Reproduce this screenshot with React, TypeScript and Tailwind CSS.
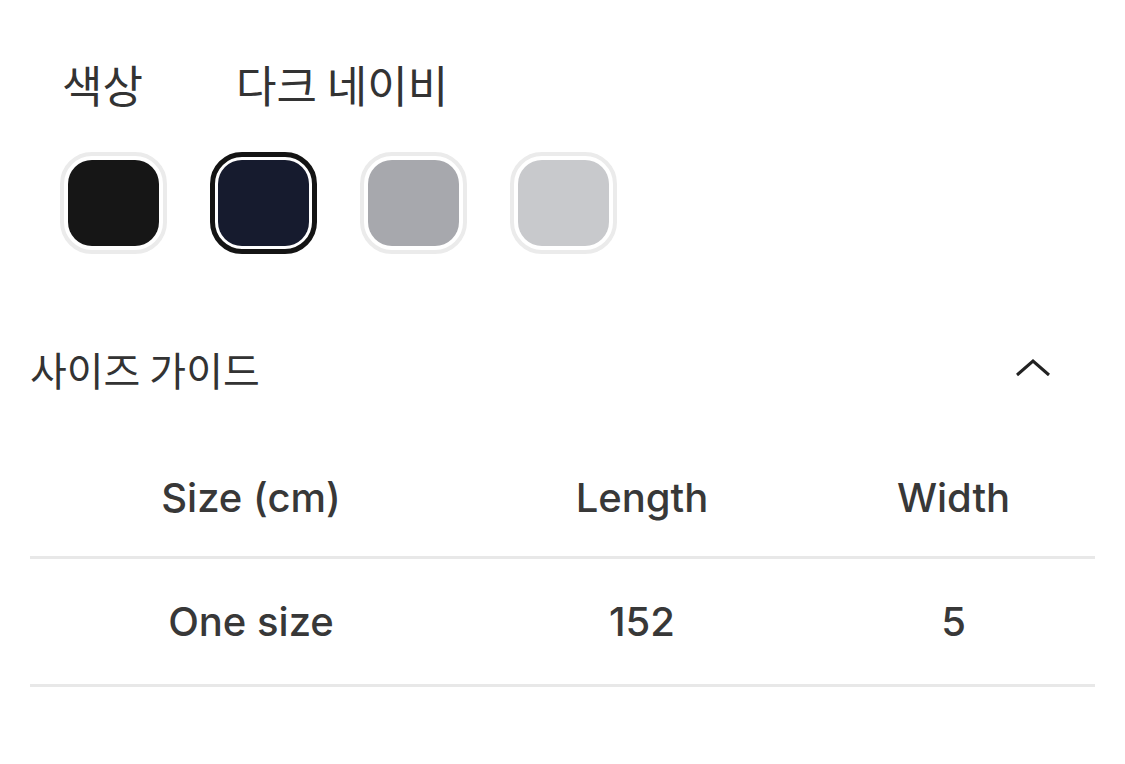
const swatches = [
  { name: "블랙", color: "bg-[#161616]" },
  { name: "다크 네이비", color: "bg-[#161b2e]", selected: true },
  { name: "그레이", color: "bg-[#a7a8ad]" },
  { name: "라이트 그레이", color: "bg-[#c8c9cc]" },
];

const rows = [{ size: "One size", length: "152", width: "5" }];

function Swatch({ color, selected }: { color: string; selected?: boolean }) {
  return (
    <button
      className={
        selected
          ? "flex h-[102px] w-[107px] items-center justify-center rounded-[32px] border-[5px] border-[#141414] p-[3px]"
          : "flex h-[102px] w-[107px] items-center justify-center rounded-[32px] border-[4px] border-[#ebebeb] p-[4px]"
      }
    >
      <span className={`block h-full w-full rounded-[24px] ${color}`} />
    </button>
  );
}

export default function App() {
  return (
    <div
      className="min-h-[764px] w-[1125px] bg-white text-[#333333]"
      style={{ fontFamily: '"Inter", "Noto Sans CJK KR", sans-serif' }}
    >
      {/* Color */}
      <section className="px-[60px] pt-[54px]">
        <div className="flex items-center text-[44px] leading-[60px]">
          <span className="w-[176px] pl-[2px]" style={{ fontFamily: '"Noto Sans CJK KR", sans-serif' }}>
            색상
          </span>
          <span style={{ fontFamily: '"Noto Sans CJK KR", sans-serif' }}>다크 네이비</span>
        </div>
        <div className="mt-[38px] flex gap-[43px]">
          {swatches.map((s) => (
            <Swatch key={s.name} color={s.color} selected={s.selected} />
          ))}
        </div>
      </section>

      {/* Size guide */}
      <section className="px-[30px] pt-[88px]">
        <div className="flex items-center justify-between pr-[44px]">
          <h3
            className="text-[40px] leading-[54px] font-normal"
            style={{ fontFamily: '"Noto Sans CJK KR", sans-serif' }}
          >
            사이즈 가이드
          </h3>
          <svg width="36" height="20" viewBox="0 0 36 20" fill="none" className="mt-[-2px]">
            <polyline points="2,17 18,3 34,17" stroke="#222" strokeWidth="3" />
          </svg>
        </div>

        <div className="mt-[78px] text-[40px] font-medium text-[#383838]">
          <div className="flex h-[82px] items-start leading-[48px]">
            <div className="w-[442px] text-center">Size (cm)</div>
            <div className="w-[340px] text-center">Length</div>
            <div className="flex-1 text-center">Width</div>
          </div>
          <div className="h-[3px] bg-[#e8e8e8]" />
          {rows.map((r) => (
            <div key={r.size}>
              <div className="flex h-[125px] items-center leading-[48px]">
                <div className="w-[442px] text-center">{r.size}</div>
                <div className="w-[340px] text-center">{r.length}</div>
                <div className="flex-1 text-center">{r.width}</div>
              </div>
              <div className="h-[3px] bg-[#e8e8e8]" />
            </div>
          ))}
        </div>
      </section>
    </div>
  );
}
